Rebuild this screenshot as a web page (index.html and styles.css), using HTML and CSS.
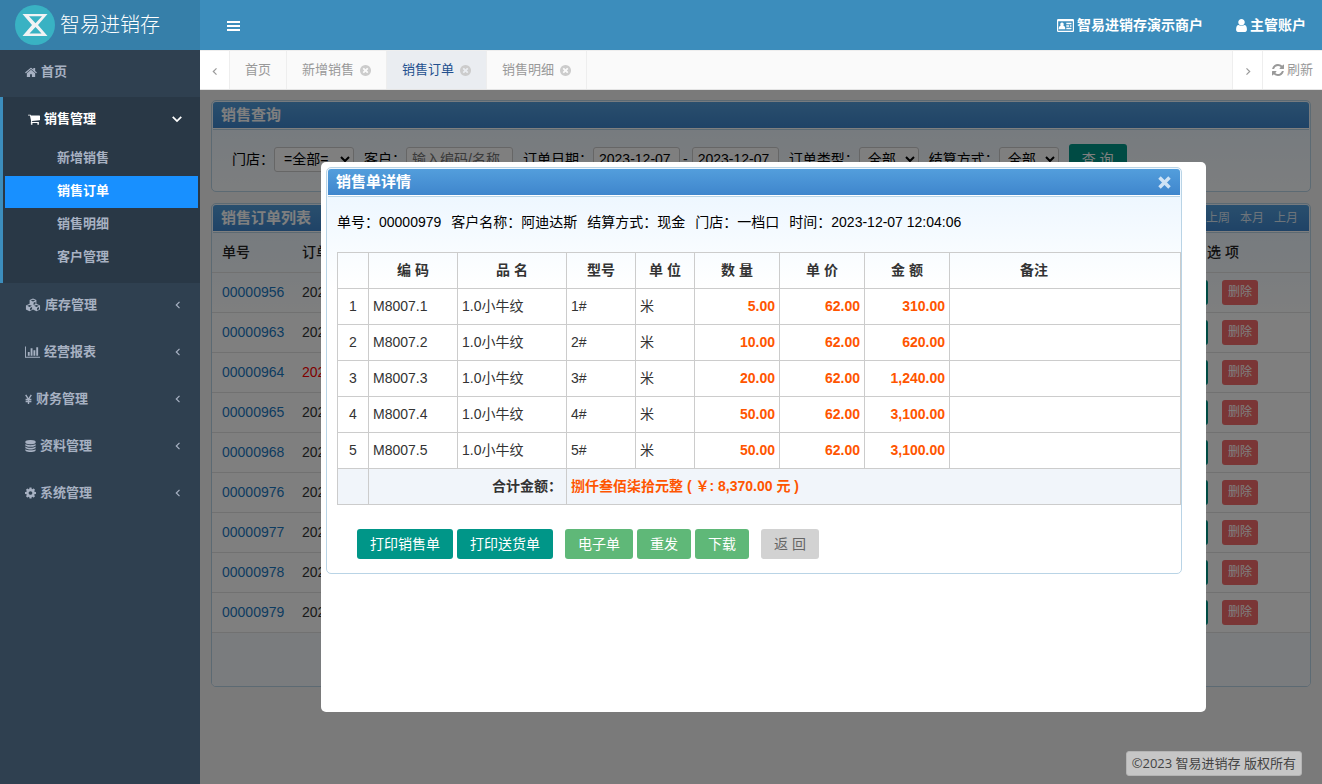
FILE: index.html
```html
<!DOCTYPE html>
<html lang="zh-CN">
<head>
<meta charset="utf-8">
<title>智易进销存</title>
<link rel="stylesheet" href="styles.css">
</head>
<body>
<svg class="sprite" aria-hidden="true">
  <symbol id="i-home" viewBox="64 192 1664 1408"><path d="M1472 992v480q0 26-19 45t-45 19h-384v-384h-256v384h-384q-26 0-45-19t-19-45v-480q0-1 .5-3t.5-3l575-474 575 474q1 2 1 6zm223-69l-62 74q-8 9-21 11h-3q-13 0-21-7l-692-577-692 577q-12 8-24 7-13-2-21-11l-62-74q-8-10-7-23.500t11-21.500l719-599q32-26 76-26t76 26l244 204v-195q0-14 9-23t23-9h192q14 0 23 9t9 23v408l219 182q10 8 11 21.500t-7 23.500z"/></symbol>
  <symbol id="i-cart" viewBox="64 192 1664 1472"><path d="M704 1536q0 52-38 90t-90 38-90-38-38-90 38-90 90-38 90 38 38 90zm896 0q0 52-38 90t-90 38-90-38-38-90 38-90 90-38 90 38 38 90zm128-1088v512q0 24-16.500 42.500t-40.500 21.500l-1044 122q13 60 13 70 0 16-24 64h920q26 0 45 19t19 45-19 45-45 19h-1024q-26 0-45-19t-19-45q0-11 8-31.500t16-36 21.500-40 15.500-29.500l-177-823h-204q-26 0-45-19t-19-45 19-45 45-19h256q16 0 28.500 6.500t19.500 15.500 13 24.500 8 26 5.500 29.500 4.500 26h1201q26 0 45 19t19 45z"/></symbol>
  <symbol id="i-cubes" viewBox="0 0 17 14"><path fill-rule="evenodd" d="M8.500 .2l3.600 1.500v4.100l3.900 1.700v4.300l-3.800 1.900-3.700-1.800-3.700 1.800-3.800-1.900v-4.300l3.900-1.700v-4.100zM8.500 1.300l-2.500 1 2.500 1.100 2.500-1.100zM9.100 4.500v2.400l2-.9v-2.400zM4.800 6.900l-2.500 1 2.500 1.100 2.500-1.100zM5.400 10.100v2.500l2.100-1v-2.400zM12.200 6.900l-2.500 1 2.500 1.100 2.500-1.100zM12.800 10.100v2.500l2.100-1v-2.400z"/></symbol>
  <symbol id="i-chart" viewBox="0 128 2048 1536"><path d="M640 896v512h-256v-512h256zm384-512v1024h-256v-1024h256zm1024 1152v128h-2048v-1536h128v1408h1920zm-640-896v768h-256v-768h256zm384-384v1152h-256v-1152h256z"/></symbol>
  <symbol id="i-yen" viewBox="0 0 8 11"><path d="M.8 .3L4 5.300 7.200 .3M4 5v5.500M.7 5.500h6.600M.7 7.700h6.600" fill="none" stroke="currentColor" stroke-width="1.600"/></symbol>
  <symbol id="i-db" viewBox="128 0 1536 1792"><path d="M896 768q237 0 443-43t325-127v170q0 69-103 128t-280 93.500-385 34.500-385-34.500-280-93.500-103-128v-170q119 84 325 127t443 43zm0 768q237 0 443-43t325-127v170q0 69-103 128t-280 93.500-385 34.500-385-34.500-280-93.500-103-128v-170q119 84 325 127t443 43zm0-384q237 0 443-43t325-127v170q0 69-103 128t-280 93.500-385 34.500-385-34.500-280-93.500-103-128v-170q119 84 325 127t443 43zm0-1152q208 0 385 34.500t280 93.500 103 128v128q0 69-103 128t-280 93.500-385 34.500-385-34.500-280-93.500-103-128v-128q0-69 103-128t280-93.500 385-34.500z"/></symbol>
  <symbol id="i-cog" viewBox="128 128 1536 1536"><path d="M1152 896q0-106-75-181t-181-75-181 75-75 181 75 181 181 75 181-75 75-181zm512-109v222q0 12-8 23t-20 13l-185 28q-19 54-39 91 35 50 107 138 10 12 10 25t-9 23q-27 37-99 108t-94 71q-12 0-26-9l-138-108q-44 23-91 38-16 136-29 186-7 28-36 28h-222q-14 0-24.500-8.500t-11.500-21.500l-28-184q-49-16-90-37l-141 107q-10 9-25 9-14 0-25-11-126-114-165-168-7-10-7-23 0-12 8-23 15-21 51-66.500t54-70.500q-27-50-41-99l-183-27q-13-2-21-12.500t-8-23.500v-222q0-12 8-23t19-13l186-28q14-46 39-92-40-57-107-138-10-12-10-24 0-10 9-23 26-36 98.500-107.500t94.500-71.500q13 0 26 10l138 107q44-23 91-38 16-136 29-186 7-28 36-28h222q14 0 24.500 8.500t11.500 21.500l28 184q49 16 90 37l142-107q9-9 24-9 13 0 25 10 129 119 165 170 7 8 7 22 0 12-8 23-15 21-51 66.500t-54 70.500q26 50 41 98l183 28q13 2 21 12.500t8 23.500z"/></symbol>
  <symbol id="i-user" viewBox="256 128 1280 1536"><path d="M1536 1399q0 109-62.500 187t-150.500 78h-854q-88 0-150.500-78t-62.500-187q0-85 8.500-160.500t31.500-152 58.500-131 94-89 134.500-34.500q131 128 313 128t313-128q76 0 134.500 34.500t94 89 58.500 131 31.500 152 8.500 160.500zm-256-887q0 159-112.500 271.500t-271.500 112.500-271.500-112.500-112.500-271.500 112.500-271.500 271.500-112.500 271.500 112.500 112.500 271.500z"/></symbol>
  <symbol id="i-card" viewBox="0 0 17 13"><path fill-rule="evenodd" d="M1.200 0h14.600q1.200 0 1.200 1.200v10.600q0 1.200-1.200 1.200h-14.600q-1.200 0-1.200-1.200v-10.600q0-1.200 1.200-1.200zM1.200 2.200v9.500h14.600v-9.500zM5 3.400a1.800 1.800 0 0 1 1.300 3q2 .5 2 3.800h-6.600q0-3.300 2-3.800a1.800 1.800 0 0 1 1.300-3zM9.300 3.700h5.200v1.500h-5.200zM9.300 6.200h2.700v1.500h-2.700zM12.800 6.200h1.700v1.500h-1.700zM9.300 8.700h5.200v1.500h-5.200z"/></symbol>
  <symbol id="i-refresh" viewBox="128 128 1536 1536"><path d="M1639 1056q0 5-1 7-64 268-268 434.500t-478 166.500q-146 0-282.500-55t-243.500-157l-129 129q-19 19-45 19t-45-19-19-45v-448q0-26 19-45t45-19h448q26 0 45 19t19 45-19 45l-137 137q71 66 161 102t187 36q134 0 250-65t186-179q11-17 53-117 8-23 30-23h192q13 0 22.500 9.500t9.500 22.500zm25-800v448q0 26-19 45t-45 19h-448q-26 0-45-19t-19-45 19-45l138-138q-148-137-349-137-134 0-250 65t-186 179q-11 17-53 117-8 23-30 23h-199q-13 0-22.500-9.500t-9.500-22.500v-7q65-268 270-434.500t480-166.500q146 0 284 55.500t245 156.500l130-129q19-19 45-19t45 19 19 45z"/></symbol>
  <symbol id="i-tclose" viewBox="128 128 1536 1536"><path d="M1277 1122q0-26-19-45l-181-181 181-181q19-19 19-45 0-27-19-46l-90-90q-19-19-46-19-26 0-45 19l-181 181-181-181q-19-19-45-19-27 0-46 19l-90 90q-19 19-19 46 0 26 19 45l181 181-181 181q-19 19-19 45 0 27 19 46l90 90q19 19 46 19 26 0 45-19l181-181 181 181q19 19 45 19 27 0 46-19l90-90q19-19 19-46zm387-226q0 209-103 385.500t-279.500 279.500-385.500 103-385.500-103-279.500-279.500-103-385.500 103-385.500 279.500-279.500 385.500-103 385.500 103 279.500 279.500 103 385.500z"/></symbol>
  <symbol id="i-times" viewBox="0 0 12 12"><path d="M2 2l8 8M10 2l-8 8" fill="none" stroke="currentColor" stroke-width="2.800"/></symbol>
  <symbol id="i-bars" viewBox="0 0 13 11"><path d="M0 0h13v2h-13zM0 4h13v2h-13zM0 8h13v2h-13z"/></symbol>
  <symbol id="i-left" viewBox="0 0 8 8"><path d="M5.500 .8L2.300 4l3.200 3.200" fill="none" stroke="currentColor" stroke-width="1.200"/></symbol>
  <symbol id="i-right" viewBox="0 0 8 8"><path d="M2.500 .8L5.700 4 2.500 7.200" fill="none" stroke="currentColor" stroke-width="1.200"/></symbol>
  <symbol id="i-down" viewBox="0 0 8 8"><path d="M.6 2.300L4 5.700l3.400-3.400" fill="none" stroke="currentColor" stroke-width="1.400"/></symbol>
</svg>

<header class="topbar">
  <div class="brand">
    <svg class="logo" viewBox="0 0 40 40"><circle cx="20" cy="20" r="20" fill="#39b2c3"/><path fill="#f1f3f4" fill-rule="evenodd" d="M7.500 9h25l-9.500 11 9.500 11h-25l9.500-11zM14 11.300h13l-6.500 7zM20.500 22l-6 6.500h12z"/></svg>
    <span>智易进销存</span>
  </div>
  <button class="toggle" aria-label="菜单"><svg class="bars"><use href="#i-bars"/></svg></button>
  <nav class="account">
    <a href="#"><svg class="card"><use href="#i-card"/></svg>智易进销存演示商户</a>
    <a href="#"><svg class="user"><use href="#i-user"/></svg>主管账户</a>
  </nav>
</header>

<div class="shell">
  <aside class="sidebar">
    <a class="item" href="#"><svg class="ic"><use href="#i-home"/></svg>首页</a>
    <div class="group">
      <a class="item open" href="#"><svg class="ic"><use href="#i-cart"/></svg>销售管理<svg class="arrow down"><use href="#i-down"/></svg></a>
      <div class="subs">
        <a href="#">新增销售</a>
        <a href="#" class="current">销售订单</a>
        <a href="#">销售明细</a>
        <a href="#">客户管理</a>
      </div>
    </div>
    <a class="item" href="#"><svg class="ic wide"><use href="#i-cubes"/></svg>库存管理<svg class="arrow"><use href="#i-left"/></svg></a>
    <a class="item" href="#"><svg class="ic chart"><use href="#i-chart"/></svg>经营报表<svg class="arrow"><use href="#i-left"/></svg></a>
    <a class="item" href="#"><svg class="ic yen"><use href="#i-yen"/></svg>财务管理<svg class="arrow"><use href="#i-left"/></svg></a>
    <a class="item" href="#"><svg class="ic small"><use href="#i-db"/></svg>资料管理<svg class="arrow"><use href="#i-left"/></svg></a>
    <a class="item" href="#"><svg class="ic small"><use href="#i-cog"/></svg>系统管理<svg class="arrow"><use href="#i-left"/></svg></a>
  </aside>

  <main class="main">
    <nav class="tabs">
      <button class="step" aria-label="向左"><svg class="chev"><use href="#i-left"/></svg></button>
      <a class="tab" href="#">首页</a>
      <a class="tab" href="#">新增销售<svg class="x"><use href="#i-tclose"/></svg></a>
      <a class="tab active" href="#">销售订单<svg class="x"><use href="#i-tclose"/></svg></a>
      <a class="tab" href="#">销售明细<svg class="x"><use href="#i-tclose"/></svg></a>
      <span class="fill"></span>
      <button class="step next" aria-label="向右"><svg class="chev"><use href="#i-right"/></svg></button>
      <button class="reload"><svg class="re"><use href="#i-refresh"/></svg>刷新</button>
    </nav>

    <div class="frame">
      <section class="panel">
        <h2 class="bar">销售查询</h2>
        <form class="query">
          <label for="shop">门店：</label>
          <select id="shop" class="shop"><option>=全部=</option></select>
          <label for="client">客户：</label>
          <input id="client" class="client" placeholder="输入编码/名称">
          <label for="from">订单日期：</label>
          <input id="from" class="date" value="2023-12-07">
          <span class="dash">-</span>
          <input id="to" class="date" value="2023-12-07" aria-label="结束日期">
          <label for="kind">订单类型：</label>
          <select id="kind" class="short"><option>全部</option></select>
          <label for="pay">结算方式：</label>
          <select id="pay" class="short"><option>全部</option></select>
          <button type="button" class="btn teal">查 询</button>
        </form>
      </section>

      <section class="panel list">
        <h2 class="bar">销售订单列表<span class="ranges"><a href="#">上周</a><a href="#">本月</a><a href="#">上月</a></span></h2>
        <table class="orders">
          <thead><tr><th class="no">单号</th><th>订单</th><th class="ops">选 项</th></tr></thead>
          <tbody>
            <tr><td><a href="#">00000956</a></td><td>2023</td><td class="acts"><button class="mini go">打印</button><button class="mini del">删除</button></td></tr>
            <tr><td><a href="#">00000963</a></td><td>2023</td><td class="acts"><button class="mini go">打印</button><button class="mini del">删除</button></td></tr>
            <tr><td><a href="#">00000964</a></td><td class="red">2023</td><td class="acts"><button class="mini go">打印</button><button class="mini del">删除</button></td></tr>
            <tr><td><a href="#">00000965</a></td><td>2023</td><td class="acts"><button class="mini go">打印</button><button class="mini del">删除</button></td></tr>
            <tr><td><a href="#">00000968</a></td><td>2023</td><td class="acts"><button class="mini go">打印</button><button class="mini del">删除</button></td></tr>
            <tr><td><a href="#">00000976</a></td><td>2023</td><td class="acts"><button class="mini go">打印</button><button class="mini del">删除</button></td></tr>
            <tr><td><a href="#">00000977</a></td><td>2023</td><td class="acts"><button class="mini go">打印</button><button class="mini del">删除</button></td></tr>
            <tr><td><a href="#">00000978</a></td><td>2023</td><td class="acts"><button class="mini go">打印</button><button class="mini del">删除</button></td></tr>
            <tr><td><a href="#">00000979</a></td><td>2023</td><td class="acts"><button class="mini go">打印</button><button class="mini del">删除</button></td></tr>
          </tbody>
        </table>
        <div class="pager"></div>
      </section>

      <div class="overlay">
        <div class="dialog" role="dialog" aria-labelledby="dlg-title">
          <section class="panel detail">
            <h2 class="bar" id="dlg-title">销售单详情<button class="close" aria-label="关闭"><svg class="times"><use href="#i-times"/></svg></button></h2>
            <div class="info"><span>单号：00000979</span><span>客户名称：阿迪达斯</span><span>结算方式：现金</span><span>门店：一档口</span><span>时间：2023-12-07 12:04:06</span></div>
            <table class="goods">
              <colgroup><col class="c1"><col class="c2"><col class="c3"><col class="c4"><col class="c5"><col class="c6"><col class="c6"><col class="c6"><col></colgroup>
              <thead><tr><th></th><th>编 码</th><th>品 名</th><th>型号</th><th>单 位</th><th>数 量</th><th>单 价</th><th>金 额</th><th class="memo">备注</th></tr></thead>
              <tbody>
                <tr><td class="idx">1</td><td>M8007.1</td><td>1.0小牛纹</td><td>1#</td><td>米</td><td class="num">5.00</td><td class="num">62.00</td><td class="num">310.00</td><td></td></tr>
                <tr><td class="idx">2</td><td>M8007.2</td><td>1.0小牛纹</td><td>2#</td><td>米</td><td class="num">10.00</td><td class="num">62.00</td><td class="num">620.00</td><td></td></tr>
                <tr><td class="idx">3</td><td>M8007.3</td><td>1.0小牛纹</td><td>3#</td><td>米</td><td class="num">20.00</td><td class="num">62.00</td><td class="num">1,240.00</td><td></td></tr>
                <tr><td class="idx">4</td><td>M8007.4</td><td>1.0小牛纹</td><td>4#</td><td>米</td><td class="num">50.00</td><td class="num">62.00</td><td class="num">3,100.00</td><td></td></tr>
                <tr><td class="idx">5</td><td>M8007.5</td><td>1.0小牛纹</td><td>5#</td><td>米</td><td class="num">50.00</td><td class="num">62.00</td><td class="num">3,100.00</td><td></td></tr>
              </tbody>
              <tfoot><tr><td></td><td colspan="2" class="sum">合计金额：</td><td colspan="6" class="total">捌仟叁佰柒拾元整 ( ￥: 8,370.00 元 )</td></tr></tfoot>
            </table>
            <div class="actions">
              <div class="set"><button class="btn teal">打印销售单</button><button class="btn teal">打印送货单</button></div>
              <div class="set"><button class="btn green">电子单</button><button class="btn green">重发</button><button class="btn green">下载</button></div>
              <button class="btn gray">返 回</button>
            </div>
          </section>
        </div>
      </div>
      <div class="copyright">©2023 智易进销存 版权所有</div>
    </div>
  </main>
</div>
</body>
</html>
```
FILE: styles.css
```css
* { box-sizing: border-box; }
html, body { height: 100%; }
body {
  margin: 0;
  display: flex;
  flex-direction: column;
  font: 14px/20px "Liberation Sans", "Noto Sans CJK SC", sans-serif;
  color: #333;
  overflow: hidden;
}
a { color: inherit; text-decoration: none; }
button { font: inherit; border: 0; padding: 0; background: none; color: inherit; cursor: pointer; }
svg { fill: currentColor; flex: none; display: block; }
.sprite { position: absolute; width: 0; height: 0; }

.topbar { display: flex; height: 50px; flex: none; background: #3c8dbc; color: #fff; }
.brand {
  width: 200px; padding: 0 15px; background: #367fa9;
  display: flex; align-items: center; gap: 5px;
  font-size: 20px; font-weight: 300;
}
.logo { width: 40px; height: 40px; }
.toggle { padding: 2px 27px 0; }
.bars { width: 13px; height: 11px; }
.account { margin-left: auto; padding-right: 16px; display: flex; gap: 33px; font-weight: bold; }
.account a { display: flex; align-items: center; gap: 3px; }
.card { width: 17px; height: 13px; }
.user { width: 11px; height: 13px; }

.shell { flex: 1; display: flex; min-height: 0; }
.sidebar { width: 200px; flex: none; background: #2f4050; color: #a7b1c2; font-size: 13px; font-weight: bold; }
.item { display: flex; align-items: center; gap: 4px; height: 47px; padding: 0 18px 3px 25px; }
.ic { width: 12px; height: 11px; }
.wide { width: 16px; height: 14px; }
.chart { width: 15px; height: 12px; }
.yen { width: 7px; height: 11px; }
.small { width: 11px; height: 12px; }
.arrow { width: 8px; height: 8px; margin-left: auto; }
.down { width: 10px; height: 10px; }
.group { background: #293846; border-left: 3px solid #3c8dbc; padding-bottom: 9px; }
.open { color: #fff; }
.subs { display: flex; flex-direction: column; gap: 1px; padding: 0 2px; margin-top: -1px; }
.subs a { height: 32px; line-height: 30px; padding-left: 52px; }
.subs .current { background: #1890ff; color: #fff; }

.main { flex: 1; min-width: 0; display: flex; flex-direction: column; }
.tabs {
  height: 40px; flex: none; display: flex; background: #fafafa; color: #999; font-size: 13px;
  border-top: 1px solid #eee; border-bottom: 1px solid #e4e4e4;
}
.step { width: 30px; background: #fff; border-right: 1px solid #eee; display: flex; align-items: center; justify-content: center; padding-top: 2px; }
.next { width: 31px; border-left: 1px solid #eee; }
.chev { width: 8px; height: 9px; }
.tab { display: flex; align-items: center; gap: 6px; padding: 0 15px; border-right: 1px solid #eee; }
.x { width: 11px; height: 11px; color: #ccc; }
.active { background: #eaedf1; color: #23508e; }
.fill { flex: 1; }
.reload { width: 59px; background: #fff; display: flex; align-items: center; justify-content: center; gap: 3px; }
.re { width: 12px; height: 12px; }

.frame { flex: 1; position: relative; padding: 10px 11px; background: #f4f4f4; overflow: hidden; }
.panel {
  border: 1px solid #b9d4e6; border-radius: 5px; padding-top: 1px; color: #000;
  background: linear-gradient(#eef7ff 28px, #fff 120px);
  overflow: hidden;
}
.list { margin-top: 11px; }
.bar {
  margin: 0 1px; height: 26px; padding: 0 8px; display: flex; align-items: center;
  background: linear-gradient(#539edc, #3f86cd);
  box-shadow: 0 1px #fff, 0 2px #b9d4e6;
  border-radius: 3px 3px 0 0;
  color: #fff; font-size: 15px; font-weight: bold;
}
.query { display: flex; align-items: center; padding: 16px 20px 17px; }
.query select, .query input {
  height: 25px; border: 1px solid #ccc; border-radius: 3px; background: #fff;
  font: inherit; color: #000; padding: 0 5px; margin-right: 10px;
}
.query input::placeholder { color: #757575; }
.query .shop { width: 80px; }
.query .short { width: 60px; padding: 0 4px; }
.query .client { width: 107px; }
.query .date { width: 87px; }
.query .dash { margin: 0 4px 0 -7px; }

.btn { height: 30px; line-height: 30px; padding: 0 13px; border-radius: 3px; color: #fff; white-space: nowrap; }
.teal { background: #009688; }
.green { background: #5fb878; }
.gray { background: #d2d2d2; color: #666; }

.ranges { margin-left: auto; padding-right: 3px; display: flex; gap: 10px; font-size: 12px; font-weight: normal; color: #dbe8f5; }
.orders { width: 100%; table-layout: fixed; border-collapse: collapse; margin-top: 1px; }
.orders th, .orders td { height: 40px; padding: 0 10px; text-align: left; border-bottom: 1px solid #e2e2e2; color: #333; }
.orders th { color: #222; font-weight: 500; }
.orders .no { width: 80px; }
.orders .ops { width: 153px; padding-left: 50px; }
.orders a { color: #1a78c2; }
.orders .red { color: #f00; }
.orders .acts { padding-left: 15px; }
.mini { width: 36px; height: 25px; border-radius: 3px; font-size: 12px; color: #fff; vertical-align: middle; }
.go { background: #009688; margin-right: 14px; }
.del { background: #f56c6c; }
.pager { height: 53px; background: #f5f9fd; }

.overlay {
  position: absolute; inset: 0; background: rgba(0, 0, 0, .5);
  display: flex; align-items: center; justify-content: center; padding-left: 5px;
}
.dialog { width: 885px; height: 550px; padding: 5px 24px 0 5px; background: #fff; border-radius: 5px; }
.close { margin-left: auto; color: #cfe3f5; }
.times { width: 15px; height: 15px; }
.info { display: flex; gap: 10px; padding: 17px 10px; }
.goods { width: calc(100% - 10px); margin: 3px 0 0 10px; table-layout: fixed; border-collapse: collapse; color: #333; }
.goods th, .goods td { height: 36px; padding: 0 4px 2px; border: 1px solid #ccc; text-align: left; }
.goods th { text-align: center; font-weight: bold; }
.goods .memo { padding-right: 66px; }
.goods .idx { text-align: center; }
.goods .num { text-align: right; font-weight: bold; color: #f50; }
.goods tfoot { background: #f1f5fa; font-weight: bold; }
.goods .sum { text-align: right; }
.goods .total { color: #f50; }
.c1 { width: 31px; }
.c2 { width: 89px; }
.c3 { width: 109px; }
.c4 { width: 69px; }
.c5 { width: 59px; }
.c6 { width: 85px; }
.actions { display: flex; gap: 12px; padding: 24px 30px 14px; }
.set { display: flex; gap: 4px; }

.copyright {
  position: absolute; right: 20px; bottom: 8px; height: 25px; padding: 0 5px;
  border: 1px solid #b4b4b4; border-radius: 3px; background: #c6c6c6; color: #444;
  font: 13px/23px "Open Sans", "Noto Sans CJK SC", sans-serif;
}
```
